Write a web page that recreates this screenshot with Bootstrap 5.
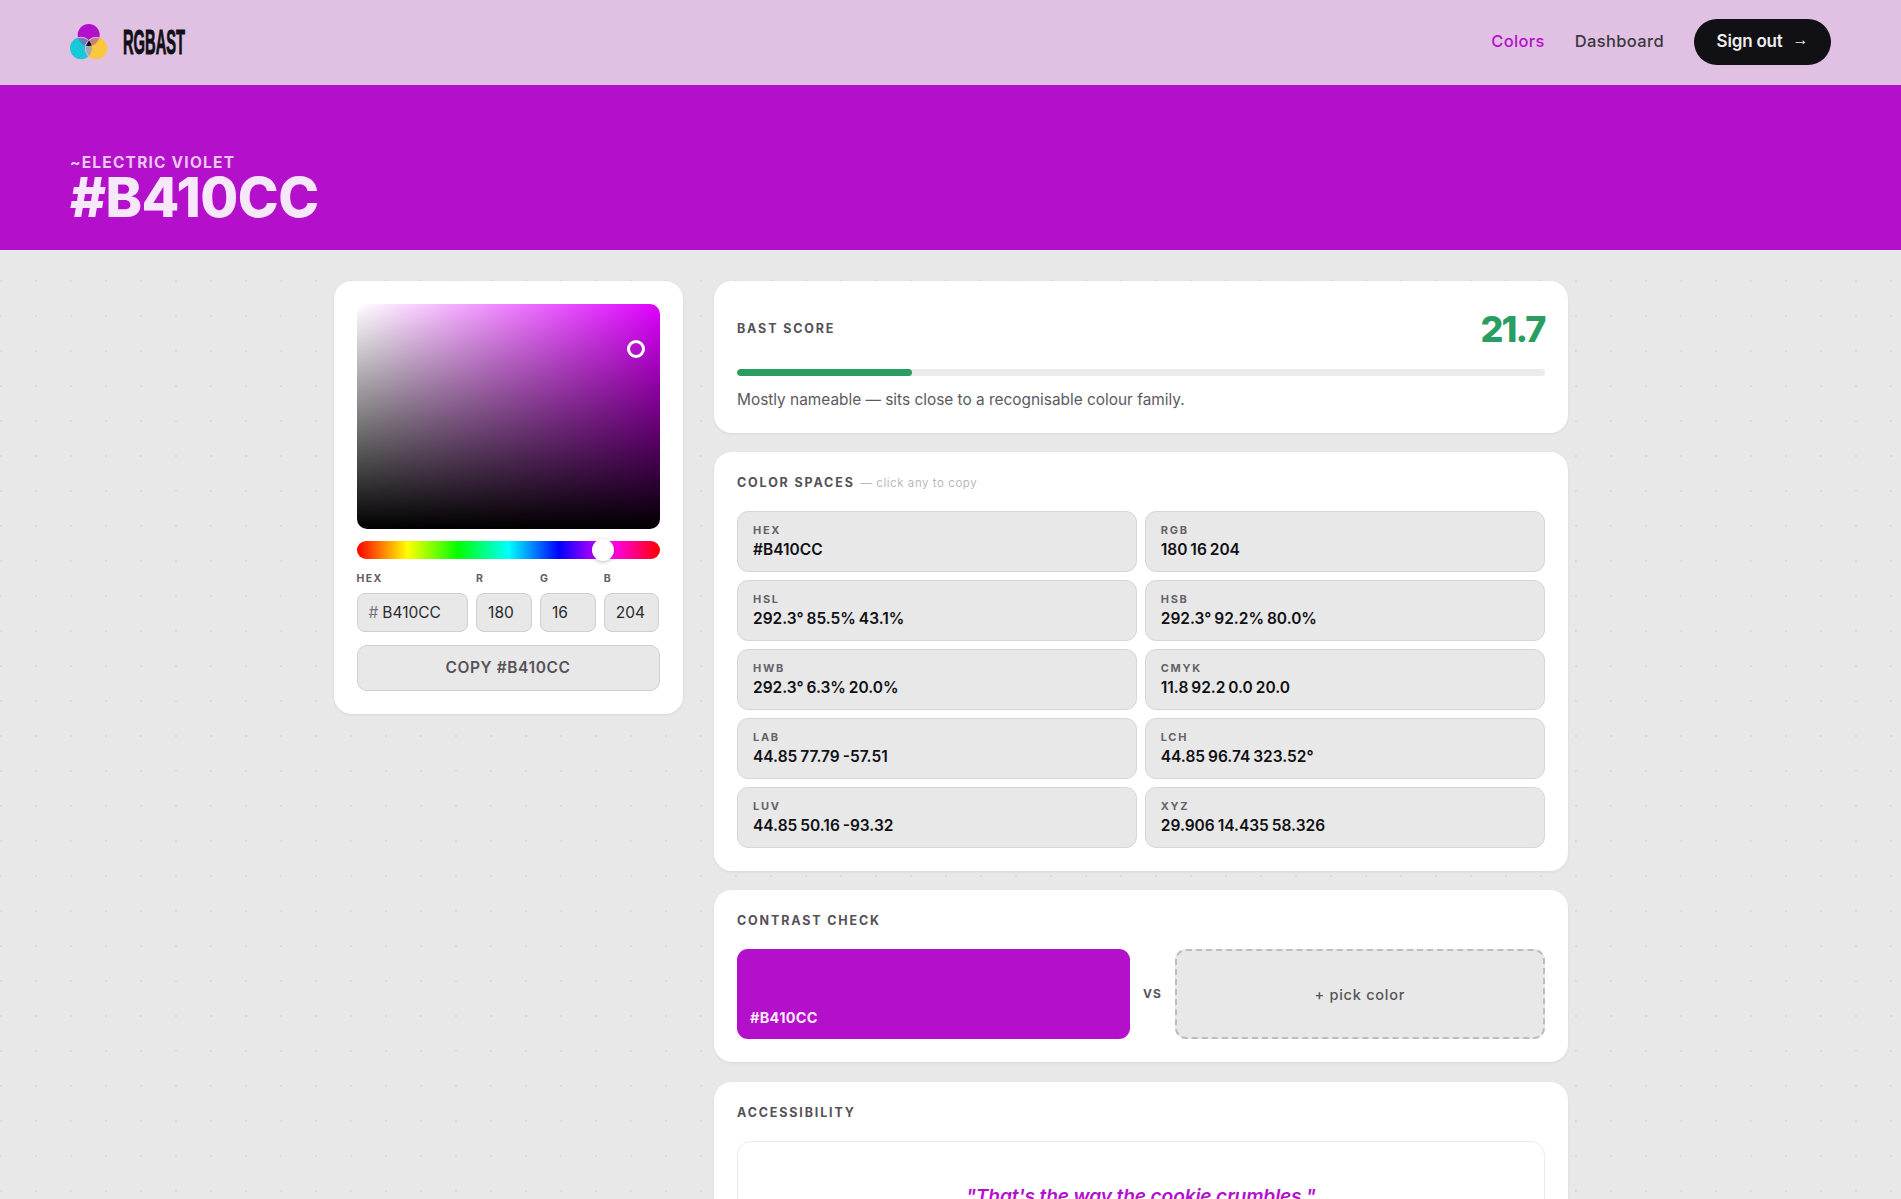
<!DOCTYPE html>
<html lang="en">
<head>
  <meta charset="utf-8">
  <meta name="viewport" content="width=device-width, initial-scale=1">
  <title>RGBAST - #B410CC</title>
  <link href="https://cdn.jsdelivr.net/npm/bootstrap@5.3.3/dist/css/bootstrap.min.css" rel="stylesheet">
  <script src="https://cdn.jsdelivr.net/npm/bootstrap@5.3.3/dist/js/bootstrap.bundle.min.js"></script>
  <style>
    html, body { height: 100%; overflow: hidden; }
    body {
      font-family: Inter, "Liberation Sans", sans-serif;
      background-color: #e8e8e8;
      background-image: radial-gradient(circle at 1px 1px, #dadada 1px, transparent 1.2px);
      background-size: 35px 35px;
      color: #111015;
    }

    /* top bar */
    .top-bar { height: 85px; padding: 0 70px 1px; background: #e0c1e3; }
    .brand-mark { margin-left: -2px; }
    .brand-word {
      font-family: "Liberation Sans Narrow", "Liberation Sans", sans-serif;
      font-weight: 700; font-size: 35px; line-height: 34px; color: #111015;
      display: inline-block; width: 62px; margin-left: 15px; white-space: nowrap;
      transform: scaleX(.42); transform-origin: left center;
      -webkit-text-stroke: 1px #111015;
    }
    .top-link { font-size: 16.5px; font-weight: 500; letter-spacing: .35px; padding: 0 0 2px !important; color: #3a383d; }
    .top-link.is-on { color: #b410cc; }
    .top-link + .top-link { margin-left: 30px; }
    .signout { height: 46px; width: 137px; margin-left: 30px; gap: 10px; background: #111015; border: 0; font-size: 17px; font-weight: 600; letter-spacing: -.2px; color: #eee; }
    .signout:hover { background: #111015; color: #eee; }
    .signout-arrow { font-family: "Liberation Sans", sans-serif; font-weight: 400; font-size: 16px; margin-bottom: 5px; }

    /* hero */
    .hero { height: 165px; padding: 70px 70px 0; background: #b410cc; }
    .hero-sub { font-size: 15.5px; line-height: 16px; font-weight: 700; letter-spacing: 1.2px; color: #edc7f3; }
    .hero-hex { font-size: 55px; line-height: 50px; font-weight: 800; letter-spacing: -.5px; color: #f7e7fb; margin: 1px 0 0; }

    /* page grid */
    .page-wrap { width: 1234px; margin: 31px auto 0; gap: 31.5px; }
    .side-col { flex: 0 0 349px; }
    .main-col { flex: 1 1 auto; gap: 19.2px; }
    .panel { border: 0; border-radius: 18px; background: #fff; box-shadow: 0 1px 3px rgba(0,0,0,.07); padding: 23px; }
    .panel-label { font-size: 12.5px; line-height: 16px; font-weight: 700; letter-spacing: 1.85px; color: #555158; text-transform: uppercase; margin-bottom: 20px; }
    .panel-label span { font-size: 11.5px; font-weight: 400; letter-spacing: .55px; text-transform: none; color: #bbb8bd; margin-left: 1px; }

    /* picker */
    .sv-box {
      height: 225px; border-radius: 10px;
      background: linear-gradient(to top, #000, transparent), linear-gradient(to right, #fff, hsl(292.3, 100%, 50%));
    }
    .sv-handle { width: 18px; height: 18px; border: 3px solid #fff; border-radius: 50%; transform: translate(-50%, -50%); }
    .hue-bar {
      height: 18px; margin-top: 12px; border-radius: 9px;
      background: linear-gradient(to right, #f00, #ff0 16.66%, #0f0 33.33%, #0ff 50%, #00f 66.66%, #f0f 83.33%, #f00);
    }
    .hue-thumb { width: 22px; height: 22px; top: 50%; background: #fff; border-radius: 50%; transform: translate(-50%, -50%); box-shadow: 0 1px 4px rgba(0,0,0,.25); }
    .chan-grid { display: grid; grid-template-columns: 2fr 1fr 1fr 1fr; gap: 8px; margin-top: 14px; }
    .chan-label { font-size: 10.5px; line-height: 12px; font-weight: 700; letter-spacing: 1.35px; color: #5f5c62; margin-bottom: 8px; }
    .chan-input {
      height: 39px; padding: 0 11px; font-size: 15.5px; color: #2b2a2e;
      background: #e8e8e8; border: 1px solid #cfcfcf; border-radius: 8px;
    }
    .chan-input:focus { background: #e8e8e8; box-shadow: none; border-color: #cfcfcf; }
    .hash-mark { color: #77747a; margin-right: 4px; }
    .copy-btn {
      height: 46px; margin-top: 13px; font-size: 15.5px; font-weight: 600; letter-spacing: .6px; color: #56535a;
      background: #e8e8e8; border: 1px solid #cfcfcf; border-radius: 10px;
    }

    /* score */
    .score-head { height: 50px; margin-bottom: 15px; }
    .score-head .panel-label { margin: 0; }
    .score-num { font-size: 36px; line-height: 50px; font-weight: 800; letter-spacing: -1.9px; color: #2a9d63; }
    .score-track { height: 7px; background: #ebebeb; border-radius: 4px; }
    .score-fill { background: #2a9d63; border-radius: 4px; }
    .score-note { font-size: 15.4px; line-height: 21px; color: #5d595f; margin: 13px 0 0; }

    /* colour spaces */
    .space-tile { height: 61px; padding: 10px 15px 0; background: #e8e8e8; border: 1px solid #d6d6d6; border-radius: 11px; }
    .space-name { font-size: 11px; line-height: 16px; font-weight: 700; letter-spacing: 1.7px; color: #656268; }
    .space-val { font-size: 15.5px; line-height: 22px; font-weight: 600; margin-top: 1px; word-spacing: -1px; color: #111015; }

    /* contrast */
    .contrast-a { flex: 0 0 393px; height: 90px; padding: 0 13px 11px; background: #b410cc; border-radius: 11px; color: #f7e7fb; font-size: 14.5px; font-weight: 700; letter-spacing: .3px; }
    .contrast-vs { flex: 0 0 45px; font-size: 12px; font-weight: 700; letter-spacing: 1.1px; color: #59565c; }
    .contrast-b { height: 90px; background: #e8e8e8; border: 2px dashed #bdbdbd; border-radius: 11px; font-size: 14.5px; font-weight: 500; letter-spacing: .75px; color: #56535a; }

    /* accessibility */
    .quote-box { border: 1px solid #ebebeb; border-radius: 14px; padding: 40px 20px 40px; }
    .quote-line { font-size: 19.2px; line-height: 28px; font-style: italic; font-weight: 600; letter-spacing: -.15px; color: #b410cc; margin: 0; }
  </style>
</head>
<body>
<nav class="navbar navbar-expand top-bar">
  <a class="navbar-brand d-flex align-items-center p-0 m-0" href="#">
    <svg class="brand-mark" width="40" height="40" viewBox="0 0 40 40" aria-hidden="true">
      <defs>
        <clipPath id="clipM"><circle cx="20.7" cy="13" r="11"/></clipPath>
        <clipPath id="clipC"><circle cx="13" cy="26.3" r="11"/></clipPath>
      </defs>
      <circle cx="20.7" cy="13" r="11" fill="#b410cc"/>
      <circle cx="13" cy="26.3" r="11" fill="#19c8d8"/>
      <circle cx="28.3" cy="26.3" r="11" fill="#fbc73f"/>
      <g clip-path="url(#clipM)"><circle cx="13" cy="26.3" r="11" fill="#6b7cbc" stroke="#dcb6e6" stroke-width="1"/></g>
      <g clip-path="url(#clipM)"><circle cx="28.3" cy="26.3" r="11" fill="#c4837c" stroke="#dcb6e6" stroke-width="1"/></g>
      <g clip-path="url(#clipC)"><circle cx="28.3" cy="26.3" r="11" fill="#a9a9a9" stroke="#dcb6e6" stroke-width="1"/></g>
      <g clip-path="url(#clipM)"><g clip-path="url(#clipC)"><circle cx="28.3" cy="26.3" r="11" fill="#0d0b10" stroke="#dcb6e6" stroke-width="1"/></g></g>
    </svg>
    <span class="brand-word">RGBAST</span>
  </a>
  <div class="navbar-nav ms-auto align-items-center">
    <a class="nav-link top-link is-on" href="#">Colors</a>
    <a class="nav-link top-link" href="#">Dashboard</a>
    <button class="btn rounded-pill signout d-flex align-items-center justify-content-center" type="button">Sign out <span class="signout-arrow">→</span></button>
  </div>
</nav>

<header class="hero">
  <div class="hero-sub">~ELECTRIC VIOLET</div>
  <h1 class="hero-hex">#B410CC</h1>
</header>

<div class="d-flex align-items-start page-wrap">
  <aside class="side-col">
    <div class="card panel">
      <div class="position-relative sv-box">
        <div class="position-absolute sv-handle" style="left:92.2%;top:20%"></div>
      </div>
      <div class="position-relative hue-bar">
        <div class="position-absolute hue-thumb" style="left:81.2%"></div>
      </div>
      <div class="chan-grid">
        <div>
          <div class="chan-label">HEX</div>
          <div class="form-control d-flex align-items-center chan-input"><span class="hash-mark">#</span>B410CC</div>
        </div>
        <div>
          <div class="chan-label">R</div>
          <input class="form-control chan-input" value="180">
        </div>
        <div>
          <div class="chan-label">G</div>
          <input class="form-control chan-input" value="16">
        </div>
        <div>
          <div class="chan-label">B</div>
          <input class="form-control chan-input" value="204">
        </div>
      </div>
      <button class="btn w-100 copy-btn" type="button">COPY #B410CC</button>
    </div>
  </aside>

  <main class="d-flex flex-column main-col">
    <section class="card panel">
      <div class="d-flex justify-content-between align-items-center score-head">
        <div class="panel-label">BAST Score</div>
        <div class="score-num">21.7</div>
      </div>
      <div class="progress score-track"><div class="progress-bar score-fill" style="width:21.7%"></div></div>
      <p class="score-note">Mostly nameable — sits close to a recognisable colour family.</p>
    </section>

    <section class="card panel">
      <div class="panel-label">Color spaces <span>— click any to copy</span></div>
      <div class="row row-cols-2 g-2">
        <div class="col"><div class="space-tile"><div class="space-name">HEX</div><div class="space-val">#B410CC</div></div></div>
        <div class="col"><div class="space-tile"><div class="space-name">RGB</div><div class="space-val">180 16 204</div></div></div>
        <div class="col"><div class="space-tile"><div class="space-name">HSL</div><div class="space-val">292.3° 85.5% 43.1%</div></div></div>
        <div class="col"><div class="space-tile"><div class="space-name">HSB</div><div class="space-val">292.3° 92.2% 80.0%</div></div></div>
        <div class="col"><div class="space-tile"><div class="space-name">HWB</div><div class="space-val">292.3° 6.3% 20.0%</div></div></div>
        <div class="col"><div class="space-tile"><div class="space-name">CMYK</div><div class="space-val">11.8 92.2 0.0 20.0</div></div></div>
        <div class="col"><div class="space-tile"><div class="space-name">LAB</div><div class="space-val">44.85 77.79 -57.51</div></div></div>
        <div class="col"><div class="space-tile"><div class="space-name">LCH</div><div class="space-val">44.85 96.74 323.52°</div></div></div>
        <div class="col"><div class="space-tile"><div class="space-name">LUV</div><div class="space-val">44.85 50.16 -93.32</div></div></div>
        <div class="col"><div class="space-tile"><div class="space-name">XYZ</div><div class="space-val">29.906 14.435 58.326</div></div></div>
      </div>
    </section>

    <section class="card panel">
      <div class="panel-label">Contrast check</div>
      <div class="d-flex align-items-center">
        <div class="d-flex align-items-end contrast-a">#B410CC</div>
        <div class="text-center contrast-vs">VS</div>
        <div class="d-flex align-items-center justify-content-center flex-grow-1 contrast-b">+ pick color</div>
      </div>
    </section>

    <section class="card panel">
      <div class="panel-label">Accessibility</div>
      <div class="text-center quote-box">
        <p class="quote-line">"That's the way the cookie crumbles."</p>
      </div>
    </section>
  </main>
</div>
</body>
</html>
